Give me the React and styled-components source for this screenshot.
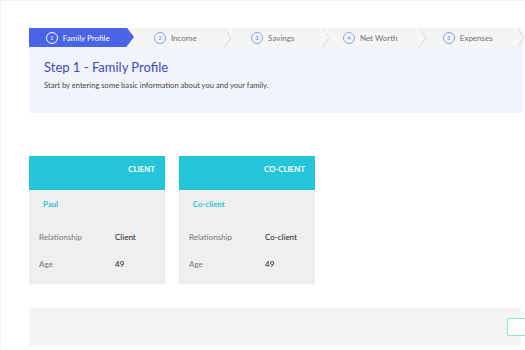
import React from 'react'
import styled, { createGlobalStyle } from 'styled-components'

const steps = ['Family Profile', 'Income', 'Savings', 'Net Worth', 'Expenses'];

const people = [
	{ tag: 'CLIENT', name: 'Paul', relationship: 'Client', age: 49 },
	{ tag: 'CO-CLIENT', name: 'Co-client', relationship: 'Co-client', age: 49 },
];

const Chevron = () => (
	<ChevronIcon width="8" height="19" viewBox="0 0 8 19">
		<polyline points="0.5,0 7,9.5 0.5,19" fill="none" stroke="#dcdcdc" strokeWidth="1" />
	</ChevronIcon>
);

const App = () => {
	return (
		<Page>
			<GlobalStyle />
			{/* ==================== Stepper ==================== */}
			<Stepper>
				{steps.map((label, i) => (
					<Step key={label} $active={i === 0}>
						<StepNumber $active={i === 0}>{i + 1}</StepNumber>
						<StepLabel $active={i === 0}>{label}</StepLabel>
						{i !== 0 && <Chevron />}
					</Step>
				))}
			</Stepper>
			{/* ==================== Intro ==================== */}
			<Intro>
				<Title>Step 1 - Family Profile</Title>
				<Subtitle>Start by entering some basic information about you and your family.</Subtitle>
			</Intro>
			{/* ==================== Cards ==================== */}
			<Cards>
				{people.map((p) => (
					<Card key={p.tag}>
						<CardHeader>{p.tag}</CardHeader>
						<CardBody>
							<Name>{p.name}</Name>
							<Row>
								<Label>Relationship</Label>
								<Value>{p.relationship}</Value>
							</Row>
							<Row>
								<Label>Age</Label>
								<Value>{p.age}</Value>
							</Row>
						</CardBody>
					</Card>
				))}
			</Cards>
			{/* ==================== Footer ==================== */}
			<Footer>
				<NextBtn />
			</Footer>
		</Page>
	);
}

const GlobalStyle = createGlobalStyle`
	html, body {
		margin: 0;
		padding: 0;
		background: #fff;
		overflow: hidden;
	}
	body {
		font-family: Lato, "Noto Sans", sans-serif;
		border-top: 1px solid #f2f2f2;
		border-left: 1px solid #f2f2f2;
		height: 349px;
	}
`;

const Page = styled.div`
	width: 494px;
	padding: 27px 0 0 28px;
`;

const Stepper = styled.div`
	display: flex;
	height: 19px;
	background: #f5f5f5;
`;

const Step = styled.div`
	position: relative;
	flex: 0 0 97.5px;
	display: flex;
	align-items: center;
	justify-content: center;
	gap: 5px;
	background: ${p => p.$active ? '#4b63e6' : 'transparent'};

	${p => p.$active && `
		&::after {
			content: '';
			position: absolute;
			right: -7px;
			top: 0;
			border-top: 9.5px solid transparent;
			border-bottom: 9.5px solid transparent;
			border-left: 7px solid #4b63e6;
			z-index: 1;
		}
	`}
`;

const ChevronIcon = styled.svg`
	position: absolute;
	right: -8px;
	top: 0;
`;

const StepNumber = styled.span`
	width: 10px;
	height: 10px;
	border-radius: 50%;
	border: 1px solid ${p => p.$active ? '#fff' : '#8c9cf0'};
	color: ${p => p.$active ? '#fff' : '#6a7ef0'};
	font-size: 6px;
	line-height: 10px;
	text-align: center;
`;

const StepLabel = styled.span`
	font-size: 8px;
	color: ${p => p.$active ? '#fff' : '#707070'};
`;

const Intro = styled.div`
	height: 66px;
	box-sizing: border-box;
	padding: 11px 15px 0 15px;
	background: #f2f4fc;
`;

const Title = styled.div`
	font-size: 13px;
	color: #3b4bbd;
	line-height: 18px;
`;

const Subtitle = styled.div`
	margin-top: 4px;
	font-size: 7.6px;
	color: #444;
`;

const Cards = styled.div`
	display: flex;
	gap: 14px;
	margin-top: 43px;
`;

const Card = styled.div`
	width: 136px;
	background: #efefef;
`;

const CardHeader = styled.div`
	height: 34px;
	box-sizing: border-box;
	padding: 8px 10px 0 0;
	background: #25c5d9;
	color: #fff;
	font-size: 7.8px;
	font-weight: bold;
	text-align: right;
`;

const CardBody = styled.div`
	padding: 10px 0 15px 10px;
`;

const Name = styled.div`
	padding-left: 4px;
	font-size: 7.8px;
	font-weight: bold;
	color: #25c5d9;
	line-height: 9px;
	margin-bottom: 24px;
`;

const Row = styled.div`
	display: flex;
	font-size: 8px;
	line-height: 9px;

	& + & {
		margin-top: 18px;
	}
`;

const Label = styled.div`
	width: 76px;
	color: #777;
`;

const Value = styled.div`
	color: #222;
`;

const Footer = styled.div`
	display: flex;
	justify-content: flex-end;
	align-items: center;
	width: 492px;
	height: 38px;
	margin-top: 24px;
	background: #f5f5f5;
`;

const NextBtn = styled.div`
	width: 40px;
	height: 16px;
	margin-right: -28px;
	border: 1.5px solid #8de6cc;
	border-radius: 2px;
	background: #fff;
`;

export default App
